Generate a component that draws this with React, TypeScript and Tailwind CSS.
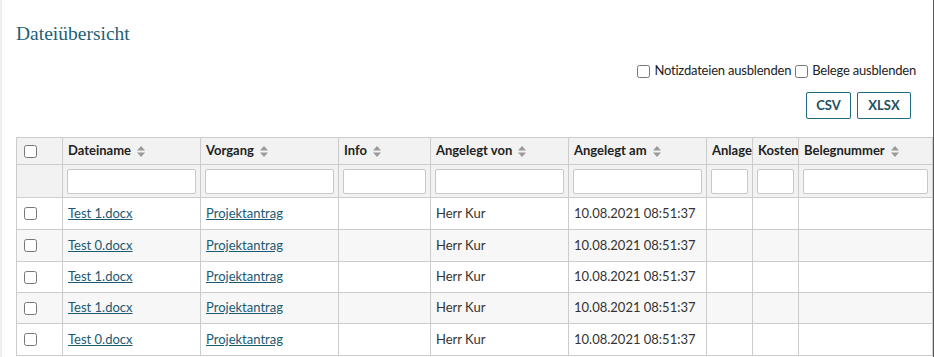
import React from "react";

const SortIcon = () => (
  <svg width="8" height="11" viewBox="0 0 8 11" className="ml-[6px] inline-block shrink-0">
    <path d="M4 0 L8 4.5 L0 4.5 Z" fill="#9a9a9a" />
    <path d="M4 11 L8 6.5 L0 6.5 Z" fill="#9a9a9a" />
  </svg>
);

const cols = [46, 138, 138, 92, 138, 138, 46, 46, 134];
const headers: { label: string; sort: boolean }[] = [
  { label: "", sort: false },
  { label: "Dateiname", sort: true },
  { label: "Vorgang", sort: true },
  { label: "Info", sort: true },
  { label: "Angelegt von", sort: true },
  { label: "Angelegt am", sort: true },
  { label: "Anlage", sort: false },
  { label: "Kosten-", sort: false },
  { label: "Belegnummer", sort: true },
];

const rows = ["Test 1.docx", "Test 0.docx", "Test 1.docx", "Test 1.docx", "Test 0.docx"];
const rowHeights = ["h-[32px]", "h-[32px]", "h-[31px]", "h-[31px]", "h-[32px]"];

const Check = () => (
  <input type="checkbox" className="m-0 block h-[13px] w-[13px] accent-[#1e6b80]" />
);

export default function App() {
  return (
    <div
      className="h-[357px] w-[934px] overflow-hidden bg-white"
      style={{ fontFamily: "Lato, 'Open Sans', sans-serif" }}
    >
      <div className="flex h-full w-[934px] flex-col overflow-hidden border-l-2 border-r border-l-[#efefef] border-r-[#5a5a5a] pl-[14px]">
        <h1
          className="mt-[22px] h-[24px] text-[19.5px] leading-[24px] text-[#1d5f78]"
          style={{ fontFamily: "'Liberation Serif', serif" }}
        >
          Dateiübersicht
        </h1>
        <div className="mt-[15px] flex h-[20px] items-center justify-end pr-[17px] text-[13px] tracking-[-0.2px] text-[#222]">
          <label className="flex items-center">
            <Check />
            <span className="ml-[4px]">Notizdateien ausblenden</span>
          </label>
          <label className="ml-[4px] flex items-center">
            <Check />
            <span className="ml-[4px]">Belege ausblenden</span>
          </label>
        </div>
        <div className="mt-[11px] flex justify-end gap-[6px] pr-[22px]">
          <button className="h-[27px] w-[45px] rounded-[2px] border border-[#1e6b80] text-[13px] font-bold text-[#1c4f60]">
            CSV
          </button>
          <button className="h-[27px] w-[54px] rounded-[2px] border border-[#1e6b80] text-[13px] font-bold text-[#1c4f60]">
            XLSX
          </button>
        </div>
        <div className="mt-[18px]">
          <table className="table-fixed border-collapse text-[13px] text-[#333]" style={{ width: 916 }}>
            <colgroup>
              {cols.map((w, i) => (
                <col key={i} style={{ width: w }} />
              ))}
            </colgroup>
            <thead>
              <tr className="h-[27px] bg-[#f2f2f2]">
                {headers.map((h, i) => (
                  <th
                    key={i}
                    className="overflow-hidden whitespace-nowrap border border-[#cccccc] px-[5px] text-left align-middle font-bold text-[#222]"
                  >
                    {i === 0 ? (
                      <div className="pl-[2px]">
                        <Check />
                      </div>
                    ) : (
                      <div className="flex items-center">
                        <span>{h.label}</span>
                        {h.sort && <SortIcon />}
                      </div>
                    )}
                  </th>
                ))}
              </tr>
              <tr className="h-[33px] bg-[#f2f2f2]">
                {headers.map((h, i) => (
                  <th key={i} className="border border-[#cccccc] px-[4px] align-middle">
                    {i === 0 ? null : (
                      <input
                        type="text"
                        className="block h-[25px] w-full rounded-[2px] border border-[#c8c8c8] bg-white"
                      />
                    )}
                  </th>
                ))}
              </tr>
            </thead>
            <tbody>
              {rows.map((name, r) => (
                <tr key={r} className={`${rowHeights[r]} ${r % 2 === 1 ? "bg-[#f7f7f7]" : "bg-white"}`}>
                  <td className="border border-[#cccccc] pl-[7px] align-middle">
                    <Check />
                  </td>
                  <td className="border border-[#cccccc] px-[5px] align-middle">
                    <a href="#" className="text-[#1a5a72] underline">
                      {name}
                    </a>
                  </td>
                  <td className="border border-[#cccccc] px-[5px] align-middle">
                    <a href="#" className="text-[#1a5a72] underline">
                      Projektantrag
                    </a>
                  </td>
                  <td className="border border-[#cccccc] px-[5px]"></td>
                  <td className="border border-[#cccccc] px-[5px] align-middle whitespace-nowrap">Herr Kur</td>
                  <td className="border border-[#cccccc] px-[5px] align-middle whitespace-nowrap">10.08.2021 08:51:37</td>
                  <td className="border border-[#cccccc]"></td>
                  <td className="border border-[#cccccc]"></td>
                  <td className="border border-[#cccccc]"></td>
                </tr>
              ))}
            </tbody>
          </table>
        </div>
      </div>
    </div>
  );
}
